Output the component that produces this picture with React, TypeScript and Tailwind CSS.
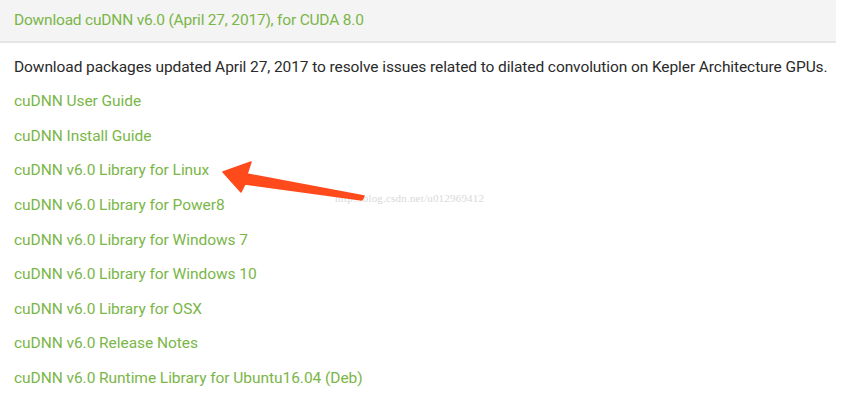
const links = [
  "cuDNN User Guide",
  "cuDNN Install Guide",
  "cuDNN v6.0 Library for Linux",
  "cuDNN v6.0 Library for Power8",
  "cuDNN v6.0 Library for Windows 7",
  "cuDNN v6.0 Library for Windows 10",
  "cuDNN v6.0 Library for OSX",
  "cuDNN v6.0 Release Notes",
  "cuDNN v6.0 Runtime Library for Ubuntu16.04 (Deb)",
];

export default function App() {
  return (
    <div className="relative w-[843px] h-[403px] overflow-hidden bg-white font-['Roboto',sans-serif] text-[15.5px]">
      <div className="w-[836px]">
        <div className="h-[43px] bg-[#f4f4f4] border-b-2 border-[#e6e6e6] flex items-center px-[14px] text-[#7ab648] tracking-[-0.2px]">
          Download cuDNN v6.0 (April 27, 2017), for CUDA 8.0
        </div>
        <div className="pt-[7px] px-[14px]">
          <div className="h-[34.6px] flex items-center text-[#2a2a2a] whitespace-nowrap tracking-[-0.09px]">
            Download packages updated April 27, 2017 to resolve issues related to dilated convolution on Kepler Architecture GPUs.
          </div>
          {links.map((l) => (
            <div key={l} className="h-[34.6px] flex items-center tracking-[-0.05px]">
              <a className="text-[#7ab648] cursor-pointer">{l}</a>
            </div>
          ))}
        </div>
      </div>

      {/* watermark */}
      <div className="absolute left-[335px] top-[190px] text-[11px] text-[#d9d9d9] font-['Liberation_Serif',serif] tracking-[0.2px]">
        http://blog.csdn.net/u012969412
      </div>

      {/* arrow */}
      <svg className="absolute left-0 top-0" width="843" height="403" viewBox="0 0 843 403">
        <path
          d="M223 172 L251 162 L247 174 L364 196 L362 200 L245 184 L241 192 Z"
          fill="#ff4a1c"
          stroke="#ff4a1c"
          strokeWidth="1.5"
          strokeLinejoin="round"
        />
      </svg>
    </div>
  );
}
